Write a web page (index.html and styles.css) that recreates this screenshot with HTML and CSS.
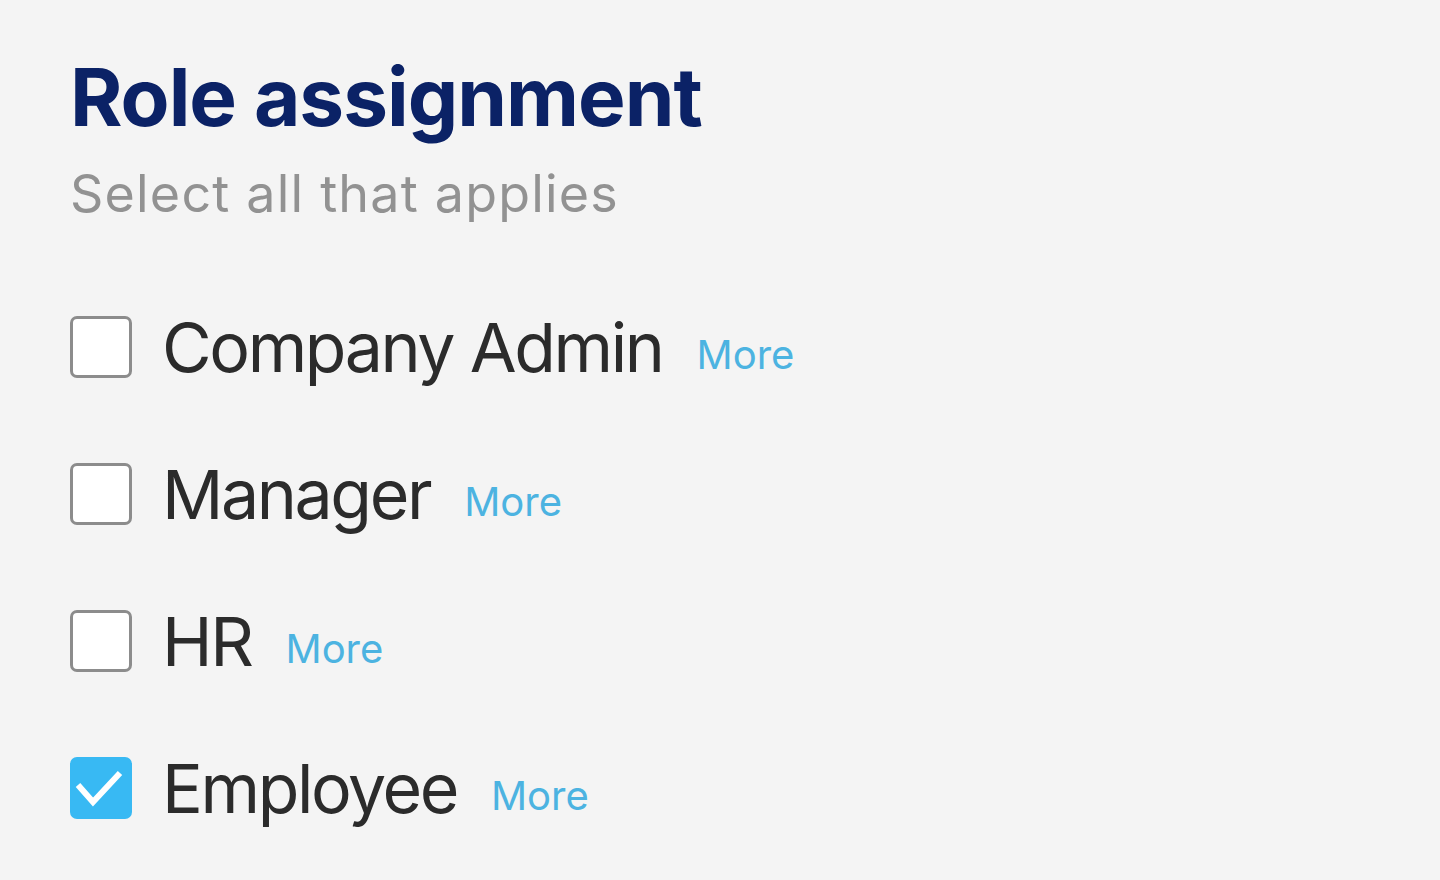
FILE: index.html
```html
<!DOCTYPE html>
<html lang="en">
<head>
    <meta charset="UTF-8">
    <meta name="viewport" content="width=device-width, initial-scale=1.0">
    <title>Role assignment</title>

    <link rel="stylesheet" href="styles.css">
</head>
<body>

    <main class="panel">
        <h1 class="title">Role assignment</h1>
        <p class="subtitle">Select all that applies</p>

        <ul class="roles">
            <li class="role">
                <span class="box"></span>
                <span class="role-name">Company Admin</span>
                <a class="more" href="#">More</a>
            </li>
            <li class="role">
                <span class="box"></span>
                <span class="role-name">Manager</span>
                <a class="more" href="#">More</a>
            </li>
            <li class="role">
                <span class="box"></span>
                <span class="role-name">HR</span>
                <a class="more" href="#">More</a>
            </li>
            <li class="role">
                <span class="box checked">
                    <svg viewBox="0 0 62 62" width="62" height="62">
                        <path d="M8 28 L23 45 L50 16" fill="none" stroke="#fff" stroke-width="6"/>
                    </svg>
                </span>
                <span class="role-name">Employee</span>
                <a class="more" href="#">More</a>
            </li>
        </ul>
    </main>

</body>
</html>
```

FILE: styles.css
```css
body {
    font-family: 'Inter', 'Liberation Sans', sans-serif;
    background-color: #f4f4f4;
    margin: 0;
    padding: 0;
}

.panel {
    padding: 52px 70px 60px;
}

.title {
    margin: 0;
    font-size: 80px;
    font-weight: 700;
    letter-spacing: -1px;
    line-height: 90px;
    color: #0b2266;
}

.subtitle {
    margin: 20px 0 0;
    font-size: 52px;
    line-height: 64px;
    letter-spacing: 1.2px;
    color: #929292;
}

.roles {
    list-style: none;
    margin: 90px 0 0;
    padding: 0;
    display: flex;
    flex-direction: column;
    gap: 85px;
}

.role {
    display: flex;
    align-items: center;
    height: 62px;
}

.box {
    box-sizing: border-box;
    width: 62px;
    height: 62px;
    border: 3px solid #8c8c8c;
    border-radius: 7px;
    background-color: #fff;
    margin-right: 30px;
    flex-shrink: 0;
}

.box.checked {
    border: none;
    background-color: #38b9f3;
}

.box svg {
    display: block;
}

.role-name {
    font-size: 68px;
    letter-spacing: -2.4px;
    color: #2b2b2b;
    margin-right: 34px;
}

.more {
    font-size: 40px;
    color: #4cb3e1;
    text-decoration: none;
    margin-top: 14px;
}
```
